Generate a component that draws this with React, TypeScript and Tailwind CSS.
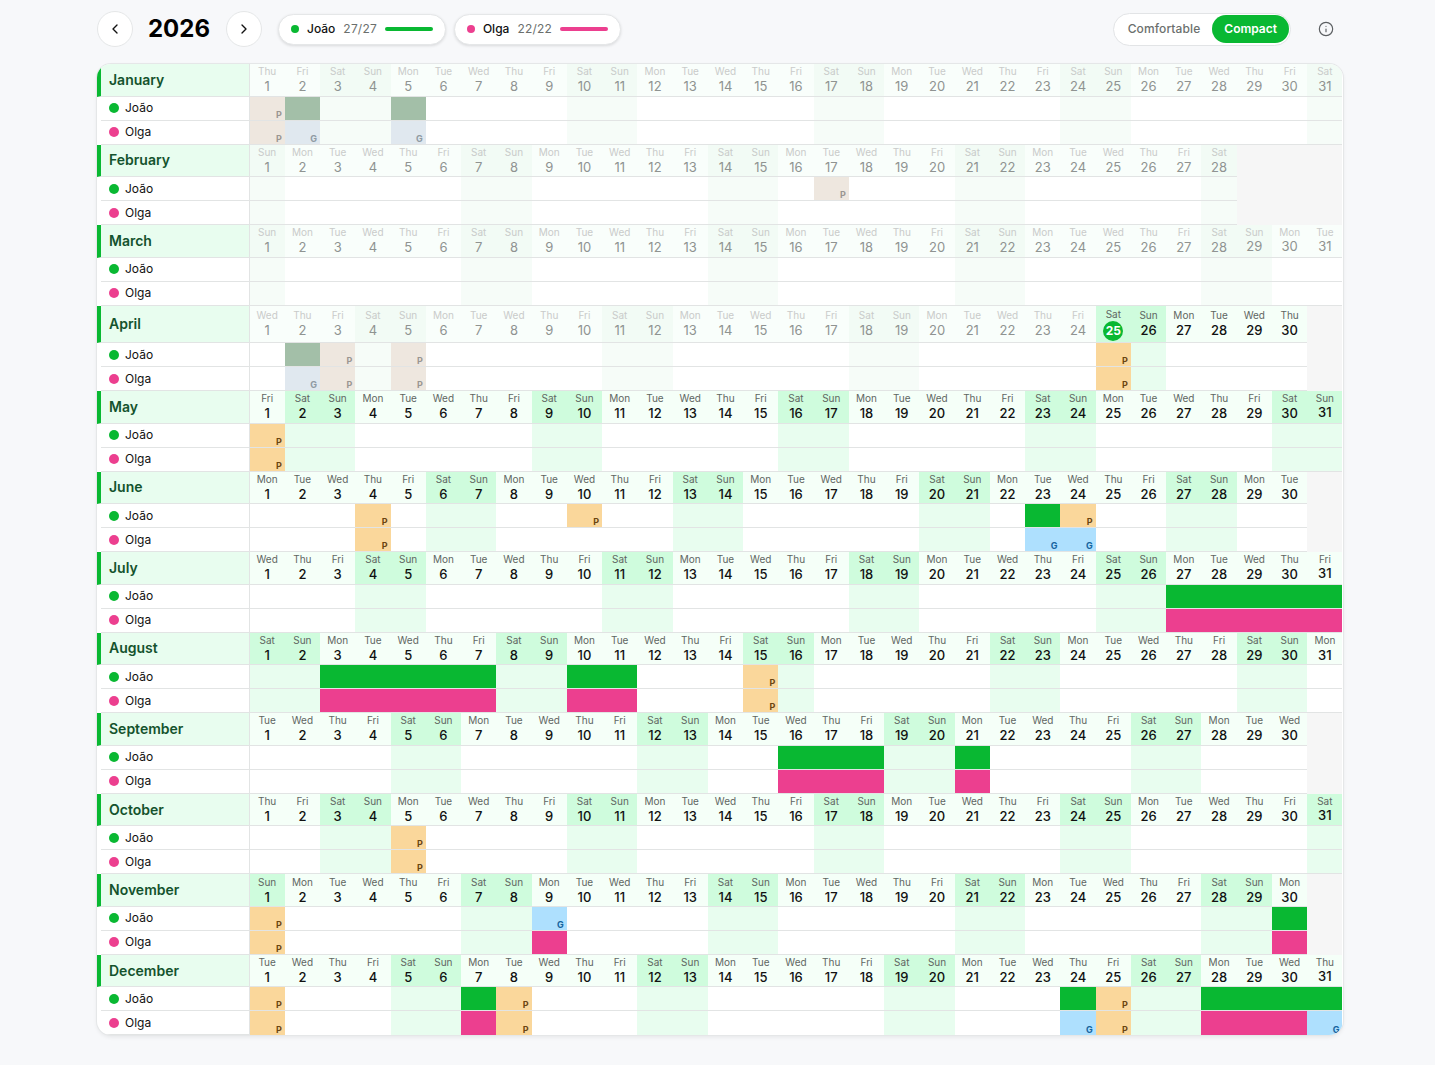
import React from 'react';
import { ChevronLeft, ChevronRight, Info } from 'lucide-react';

type Kind = 'work' | 'P' | 'G';
type PersonId = 'joao' | 'olga';

const MONTHS = ['January', 'February', 'March', 'April', 'May', 'June', 'July', 'August', 'September', 'October', 'November', 'December'];
const WEEKDAYS = ['Sun', 'Mon', 'Tue', 'Wed', 'Thu', 'Fri', 'Sat'];
const DAYS_IN_MONTH = [31, 28, 31, 30, 31, 30, 31, 31, 30, 31, 30, 31];
const COLUMNS = Array.from({ length: 31 }, (_, i) => i + 1);

const PEOPLE: { id: PersonId; name: string; dot: string }[] = [
  { id: 'joao', name: 'João', dot: 'bg-[#09b832]' },
  { id: 'olga', name: 'Olga', dot: 'bg-[#ec3f8f]' },
];

// month, person, kind, days
const ENTRIES: [number, PersonId, Kind, number[]][] = [
  [0, 'joao', 'P', [1]],
  [0, 'joao', 'work', [2, 5]],
  [0, 'olga', 'P', [1]],
  [0, 'olga', 'G', [2, 5]],
  [1, 'joao', 'P', [17]],
  [3, 'joao', 'work', [2]],
  [3, 'joao', 'P', [3, 5, 25]],
  [3, 'olga', 'G', [2]],
  [3, 'olga', 'P', [3, 5, 25]],
  [4, 'joao', 'P', [1]],
  [4, 'olga', 'P', [1]],
  [5, 'joao', 'P', [4, 10, 24]],
  [5, 'joao', 'work', [23]],
  [5, 'olga', 'P', [4]],
  [5, 'olga', 'G', [23, 24]],
  [6, 'joao', 'work', [27, 28, 29, 30, 31]],
  [6, 'olga', 'work', [27, 28, 29, 30, 31]],
  [7, 'joao', 'work', [3, 4, 5, 6, 7, 10, 11]],
  [7, 'olga', 'work', [3, 4, 5, 6, 7, 10, 11]],
  [7, 'joao', 'P', [15]],
  [7, 'olga', 'P', [15]],
  [8, 'joao', 'work', [16, 17, 18, 21]],
  [8, 'olga', 'work', [16, 17, 18, 21]],
  [9, 'joao', 'P', [5]],
  [9, 'olga', 'P', [5]],
  [10, 'joao', 'P', [1]],
  [10, 'joao', 'G', [9]],
  [10, 'joao', 'work', [30]],
  [10, 'olga', 'P', [1]],
  [10, 'olga', 'work', [9, 30]],
  [11, 'joao', 'P', [1, 8, 25]],
  [11, 'joao', 'work', [7, 24, 28, 29, 30, 31]],
  [11, 'olga', 'P', [1, 8, 25]],
  [11, 'olga', 'work', [7, 28, 29, 30]],
  [11, 'olga', 'G', [24, 31]],
];

const TODAY = { month: 3, day: 25 };

const isPast = (month: number, day: number) =>
  month < TODAY.month || (month === TODAY.month && day < TODAY.day);

const findKind = (month: number, person: PersonId, day: number): Kind | undefined =>
  ENTRIES.find(e => e[0] === month && e[1] === person && e[3].includes(day))?.[2];

const gridClass = 'grid grid-cols-[152.5px_repeat(31,minmax(0,1fr))]';

const DayHeader: React.FC<{ month: number; day: number }> = ({ month, day }) => {
  const date = new Date(2026, month, day);
  const weekend = date.getDay() === 0 || date.getDay() === 6;
  const past = isPast(month, day);
  const isToday = month === TODAY.month && day === TODAY.day;
  // columns the previous month did not have sit a pixel higher
  const shifted = month > 0 && day > DAYS_IN_MONTH[month - 1];

  let bg = past ? 'bg-[#f9fefb]' : 'bg-[#f5fff8]';
  if (weekend) bg = past ? 'bg-[#f2fbf5]' : 'bg-[#cffcdd]';

  return (
    <div className={`flex flex-col items-center justify-center border-b border-[#e2e4e4] pt-px ${bg}`}>
      <span className={`text-[10px] leading-[13px] ${past ? 'text-[#c9cbca]' : 'text-[#5f6662]'}`}>
        {WEEKDAYS[date.getDay()]}
      </span>
      {isToday ? (
        <span className="flex h-5 w-5 items-center justify-center rounded-full bg-[#09b832] text-xs leading-none font-bold text-white">
          {day}
        </span>
      ) : (
        <span
          className={`text-[13px] leading-[17px] ${past ? 'text-[#8f9391]' : 'font-medium text-[#111111]'} ${shifted ? '-translate-y-px' : ''}`}
        >
          {day}
        </span>
      )}
    </div>
  );
};

const DayCell: React.FC<{ month: number; day: number; person: PersonId; last: boolean }> = ({ month, day, person, last }) => {
  if (day > DAYS_IN_MONTH[month]) return <div className="bg-[#f6f6f6]" />;

  const weekend = [0, 6].includes(new Date(2026, month, day).getDay());
  const past = isPast(month, day);
  const kind = findKind(month, person, day);

  let bg = 'bg-white';
  if (weekend) bg = past ? 'bg-[#f6fcf8]' : 'bg-[#e8fdef]';
  if (kind === 'work') {
    if (past) bg = 'bg-[#a3bfa8]';
    else bg = person === 'joao' ? 'bg-[#09b832]' : 'bg-[#ec3f8f]';
  }
  if (kind === 'P') bg = past ? 'bg-[#eee7df]' : 'bg-[#fad79b]';
  if (kind === 'G') bg = past ? 'bg-[#e0e8ef]' : 'bg-[#aee0fe]';

  let tagColor = '';
  if (kind === 'P') tagColor = past ? 'text-[#9a9692]' : 'text-[#6b4511]';
  if (kind === 'G') tagColor = past ? 'text-[#8f9aa3]' : 'text-[#15649e]';

  return (
    <div className={`flex items-end justify-end pr-[3px] ${bg} ${last ? '' : 'border-b border-[#e2e4e4]'}`}>
      {(kind === 'P' || kind === 'G') && (
        <span className={`text-[9px] leading-[10px] font-bold ${tagColor}`}>{kind}</span>
      )}
    </div>
  );
};

const MonthBlock: React.FC<{ month: number }> = ({ month }) => {
  const tall = month === TODAY.month;
  return (
    <div>
      <div className={`${gridClass} ${tall ? 'h-[37.4px]' : 'h-[32.55px]'}`}>
        <div className="flex items-center border-r border-b border-l-4 border-r-[#e2e4e4] border-b-[#e2e4e4] border-l-[#09b832] bg-[#e8fdef] pl-2 text-sm font-semibold text-[#14532d]">
          {MONTHS[month]}
        </div>
        {COLUMNS.map(day =>
          day > DAYS_IN_MONTH[month] ? (
            <div key={day} className="bg-[#f6f6f6]" />
          ) : (
            <DayHeader key={day} month={month} day={day} />
          ),
        )}
      </div>
      {PEOPLE.map(person => {
        const last = month === 11 && person.id === 'olga';
        return (
          <div key={person.id} className={`${gridClass} h-6`}>
            <div className="ml-1 flex items-center gap-[6px] border-r border-b border-[#e2e4e4] pl-2 text-xs text-[#111111]">
              <span className={`h-[10px] w-[10px] rounded-full ${person.dot}`} />
              {person.name}
            </div>
            {COLUMNS.map(day => (
              <DayCell key={day} month={month} day={day} person={person.id} last={last} />
            ))}
          </div>
        );
      })}
    </div>
  );
};

const LegendPill: React.FC<{ name: string; count: string; dot: string; bar: string }> = ({ name, count, dot, bar }) => (
  <div className="flex h-[31px] items-center rounded-full border border-[#e5e7e8] bg-white pr-3 pl-3 shadow-[0_1px_3px_rgba(0,0,0,0.12)]">
    <span className={`h-2 w-2 rounded-full ${dot}`} />
    <span className="ml-2 text-xs font-medium text-[#111111]">{name}</span>
    <span className="ml-2 text-xs tracking-[0.2px] text-[#6b6f6d]">{count}</span>
    <span className={`ml-2 h-[3.5px] w-12 rounded-full ${bar}`} />
  </div>
);

const RoundButton: React.FC<{ children: React.ReactNode }> = ({ children }) => (
  <button className="flex h-9 w-9 items-center justify-center rounded-full border border-[#e5e7e8] bg-white text-[#111111]">
    {children}
  </button>
);

export default function App() {
  return (
    <div className="min-h-[1065px] bg-[#f7f8fa] pt-[11px] pr-[92px] pl-[97px] font-['Inter',sans-serif]">
      <header className="mb-[17px] flex h-9 items-center">
        <RoundButton>
          <ChevronLeft size={16} strokeWidth={2} />
        </RoundButton>
        <h1 className="mr-4 ml-[15px] text-2xl leading-none font-bold text-black">2026</h1>
        <RoundButton>
          <ChevronRight size={16} strokeWidth={2} />
        </RoundButton>
        <div className="ml-4 flex gap-2">
          <LegendPill name="João" count="27/27" dot="bg-[#09b832]" bar="bg-[#09b832]" />
          <LegendPill name="Olga" count="22/22" dot="bg-[#ec3f8f]" bar="bg-[#ec3f8f]" />
        </div>
        <div className="ml-auto flex h-[33px] items-center rounded-full border border-[#e2e4e6] bg-white p-px">
          <span className="pr-3 pl-[13px] text-xs font-medium tracking-[0.1px] text-[#6b6f6d]">Comfortable</span>
          <span className="flex h-7 items-center rounded-full bg-[#09b832] px-3 text-xs font-semibold text-white">
            Compact
          </span>
        </div>
        <Info size={16} strokeWidth={1.75} className="mr-[9px] ml-[27px] text-[#5c5f62]" />
      </header>
      <div className="w-[1245.5px] overflow-hidden rounded-[14px] bg-white shadow-[0_0_0_1px_#e5e7e8,0_2px_4px_rgba(0,0,0,0.08)]">
        {MONTHS.map((_, month) => (
          <MonthBlock key={month} month={month} />
        ))}
      </div>
    </div>
  );
}
